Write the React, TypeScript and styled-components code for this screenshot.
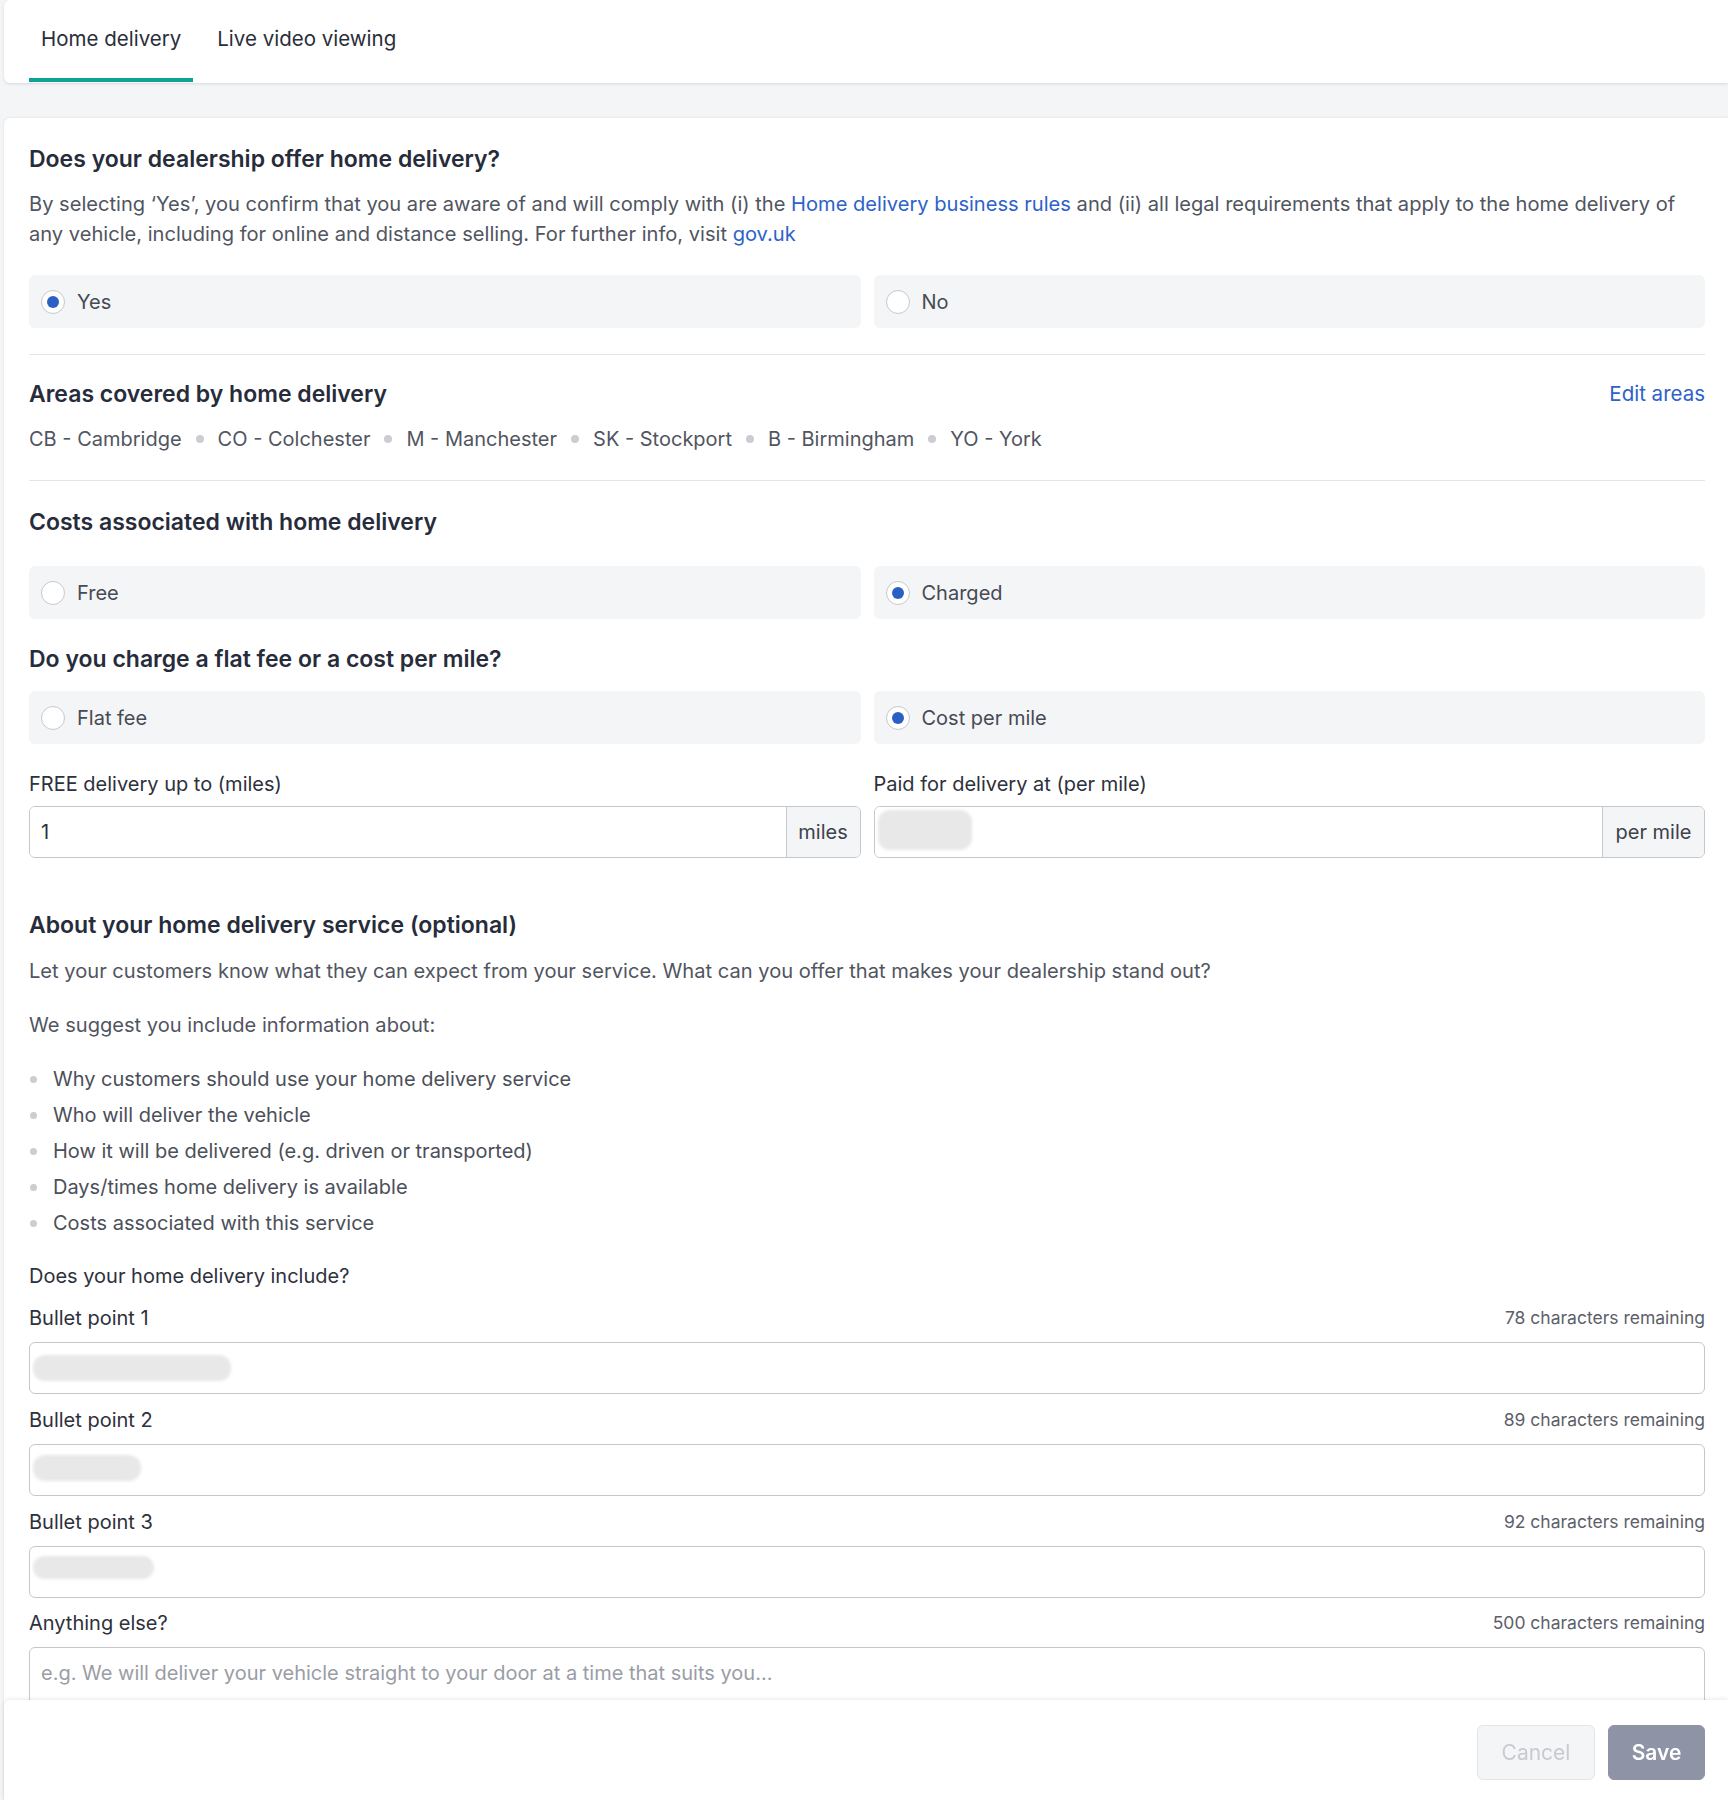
import React from 'react';
import styled, { createGlobalStyle } from 'styled-components';

const Global = createGlobalStyle`
  html, body { margin: 0; padding: 0; background: #f4f5f7; }
  body { font-family: Inter, "Noto Sans", Arial, sans-serif; color: #2a2e39; }
  * { box-sizing: border-box; }
`;

const Page = styled.div`
  height: 1800px;
  overflow: hidden;
  padding-left: 4px;
  background: #f4f5f7;
`;

const TabCard = styled.nav`
  height: 83px;
  background: #fff;
  border-radius: 6px 0 0 6px;
  box-shadow: 0 1px 3px rgba(20, 25, 40, 0.12);
  display: flex;
  align-items: stretch;
  padding-left: 25px;
  gap: 12px;
`;

const Tab = styled.div<{ $active?: boolean }>`
  padding: 0 12px 2px;
  height: 82px;
  display: flex;
  align-items: center;
  font-size: 20.5px;
  color: #2a2e39;
  border-bottom: 4px solid ${(p) => (p.$active ? '#0fa29a' : 'transparent')};
`;

const Card = styled.main`
  margin-top: 35px;
  background: #fff;
  border-radius: 6px 0 0 0;
  box-shadow: 0 0 3px rgba(20, 25, 40, 0.1);
  padding: 26px 23px 200px 25px;
`;

const Heading = styled.h2<{ $mt?: number }>`
  margin: ${(p) => p.$mt ?? 0}px 0 0;
  font-size: 23px;
  line-height: 30px;
  font-weight: 600;
  color: #272c3b;
`;

const Para = styled.p<{ $mt?: number }>`
  margin: ${(p) => p.$mt ?? 0}px 0 0;
  font-size: 20.1px;
  line-height: 30px;
  color: #51555f;
`;

const Link = styled.a`
  color: #2d62c9;
  text-decoration: none;
`;

const RadioGrid = styled.div<{ $mt: number }>`
  margin-top: ${(p) => p.$mt}px;
  display: grid;
  grid-template-columns: 1fr 1fr;
  gap: 13px;
`;

const RadioRow = styled.label`
  height: 53px;
  background: #f4f5f7;
  border-radius: 6px;
  padding-left: 12px;
  display: flex;
  align-items: center;
  gap: 12px;
  font-size: 20px;
  color: #464a54;
`;

const Circle = styled.span<{ $checked?: boolean }>`
  width: 24px;
  height: 24px;
  border-radius: 50%;
  background: #fff;
  border: 1px solid #c6c8ce;
  display: flex;
  align-items: center;
  justify-content: center;
  &::after {
    content: '';
    width: 12px;
    height: 12px;
    border-radius: 50%;
    background: ${(p) => (p.$checked ? '#2a60c4' : 'transparent')};
  }
`;

const Divider = styled.hr<{ $mt: number }>`
  margin: ${(p) => p.$mt}px 0 0;
  border: 0;
  border-top: 1px solid #e3e4e8;
`;

const SplitRow = styled.div<{ $mt: number }>`
  margin-top: ${(p) => p.$mt}px;
  display: flex;
  justify-content: space-between;
  align-items: center;
`;

const EditLink = styled(Link)`
  font-size: 20.5px;
  line-height: 30px;
`;

const Areas = styled.div`
  margin-top: 15px;
  display: flex;
  align-items: center;
  gap: 14px;
  font-size: 20px;
  line-height: 30px;
  color: #51555f;
`;

const Dot = styled.span`
  width: 8px;
  height: 8px;
  border-radius: 50%;
  background: #cbcdd2;
`;

const FieldGrid = styled.div`
  margin-top: 25px;
  display: grid;
  grid-template-columns: 1fr 1fr;
  column-gap: 13px;
`;

const Field = styled.div`
  display: flex;
  flex-direction: column;
`;

const Label = styled.div`
  font-size: 20px;
  line-height: 30px;
  color: #2d313c;
`;

const InputGroup = styled.div`
  margin-top: 7px;
  height: 52px;
  display: flex;
  border: 1px solid #c5c7cd;
  border-radius: 6px;
  overflow: hidden;
`;

const InputBox = styled.div`
  flex: 1;
  position: relative;
  display: flex;
  align-items: center;
  padding-left: 11px;
  font-size: 20px;
  color: #2d313c;
  background: #fff;
`;

const Addon = styled.div<{ $w: number }>`
  width: ${(p) => p.$w}px;
  border-left: 1px solid #c5c7cd;
  background: #f4f5f7;
  display: flex;
  align-items: center;
  justify-content: center;
  font-size: 20px;
  color: #3d414b;
`;

const Blob = styled.span<{ $w: number; $h: number; $t: number }>`
  position: absolute;
  left: 3px;
  top: ${(p) => p.$t}px;
  width: ${(p) => p.$w}px;
  height: ${(p) => p.$h}px;
  border-radius: 12px;
  background: #e8e8e9;
  filter: blur(1.5px);
`;

const List = styled.ul`
  margin: 24px 0 0;
  padding: 0;
  list-style: none;
  display: flex;
  flex-direction: column;
  gap: 6px;
`;

const Item = styled.li`
  display: flex;
  align-items: center;
  gap: 16px;
  padding-left: 1px;
  font-size: 20px;
  line-height: 30px;
  color: #4b4f59;
  &::before {
    content: '';
    width: 7px;
    height: 7px;
    border-radius: 50%;
    background: #cbcdd2;
  }
`;

const PlainText = styled.div<{ $mt: number }>`
  margin-top: ${(p) => p.$mt}px;
  font-size: 20px;
  line-height: 30px;
  color: #2d313c;
`;

const CountRow = styled.div<{ $mt: number }>`
  margin-top: ${(p) => p.$mt}px;
  display: flex;
  justify-content: space-between;
  align-items: center;
  line-height: 30px;
`;

const Count = styled.span`
  font-size: 17.5px;
  color: #5c606a;
`;

const TextInput = styled.div`
  margin-top: 9px;
  height: 52px;
  position: relative;
  border: 1px solid #c5c7cd;
  border-radius: 6px;
  background: #fff;
`;

const TextArea = styled.div`
  margin-top: 9px;
  height: 130px;
  border: 1px solid #c5c7cd;
  border-radius: 6px;
  padding: 10px 11px;
  font-size: 20px;
  line-height: 30px;
  color: #9a9da5;
`;

const Footer = styled.footer`
  position: fixed;
  left: 4px;
  right: 0;
  bottom: 0;
  height: 100px;
  background: #fff;
  border-radius: 6px 0 0 0;
  box-shadow: 0 -1px 4px rgba(20, 25, 40, 0.1);
  display: flex;
  justify-content: flex-end;
  align-items: flex-start;
  padding: 25px 23px 0 0;
  gap: 13px;
`;

const Button = styled.button<{ $primary?: boolean }>`
  height: 55px;
  width: ${(p) => (p.$primary ? 97 : 118)}px;
  border-radius: 6px;
  font-family: inherit;
  font-size: 21px;
  font-weight: ${(p) => (p.$primary ? 600 : 400)};
  border: 1px solid ${(p) => (p.$primary ? '#8e94a5' : '#e3e4e8')};
  background: ${(p) => (p.$primary ? '#8e94a5' : '#f4f5f7')};
  color: ${(p) => (p.$primary ? '#ffffff' : '#c8cad0')};
`;

const areas = ['CB - Cambridge', 'CO - Colchester', 'M - Manchester', 'SK - Stockport', 'B - Birmingham', 'YO - York'];

const bullets = [
  'Why customers should use your home delivery service',
  'Who will deliver the vehicle',
  'How it will be delivered (e.g. driven or transported)',
  'Days/times home delivery is available',
  'Costs associated with this service',
];

const Radio = ({ label, checked }: { label: string; checked?: boolean }) => (
  <RadioRow>
    <Circle $checked={checked} />
    {label}
  </RadioRow>
);

export default function App() {
  return (
    <Page>
      <Global />
      <TabCard>
        <Tab $active>Home delivery</Tab>
        <Tab>Live video viewing</Tab>
      </TabCard>
      <Card>
        <Heading>Does your dealership offer home delivery?</Heading>
        <Para $mt={15}>
          By selecting ‘Yes’, you confirm that you are aware of and will comply with (i) the{' '}
          <Link>Home delivery business rules</Link> and (ii) all legal requirements that apply to the home delivery of
          any vehicle, including for online and distance selling. For further info, visit <Link>gov.uk</Link>
        </Para>
        <RadioGrid $mt={26}>
          <Radio label="Yes" checked />
          <Radio label="No" />
        </RadioGrid>
        <Divider $mt={26} />
        <SplitRow $mt={24}>
          <Heading>Areas covered by home delivery</Heading>
          <EditLink>Edit areas</EditLink>
        </SplitRow>
        <Areas>
          {areas.map((a, i) => (
            <React.Fragment key={a}>
              {i > 0 && <Dot />}
              <span>{a}</span>
            </React.Fragment>
          ))}
        </Areas>
        <Divider $mt={26} />
        <Heading $mt={26}>Costs associated with home delivery</Heading>
        <RadioGrid $mt={29}>
          <Radio label="Free" />
          <Radio label="Charged" checked />
        </RadioGrid>
        <Heading $mt={25}>Do you charge a flat fee or a cost per mile?</Heading>
        <RadioGrid $mt={17}>
          <Radio label="Flat fee" />
          <Radio label="Cost per mile" checked />
        </RadioGrid>
        <FieldGrid>
          <Field>
            <Label>FREE delivery up to (miles)</Label>
            <InputGroup>
              <InputBox>1</InputBox>
              <Addon $w={74}>miles</Addon>
            </InputGroup>
          </Field>
          <Field>
            <Label>Paid for delivery at (per mile)</Label>
            <InputGroup>
              <InputBox>
                <Blob $w={94} $h={40} $t={3} />
              </InputBox>
              <Addon $w={102}>per mile</Addon>
            </InputGroup>
          </Field>
        </FieldGrid>
        <Heading $mt={52}>About your home delivery service (optional)</Heading>
        <Para $mt={16}>
          Let your customers know what they can expect from your service. What can you offer that makes your dealership
          stand out?
        </Para>
        <Para $mt={24}>We suggest you include information about:</Para>
        <List>
          {bullets.map((b) => (
            <Item key={b}>{b}</Item>
          ))}
        </List>
        <PlainText $mt={23}>Does your home delivery include?</PlainText>
        <CountRow $mt={12}>
          <Label>Bullet point 1</Label>
          <Count>78 characters remaining</Count>
        </CountRow>
        <TextInput>
          <Blob $w={198} $h={26} $t={12} />
        </TextInput>
        <CountRow $mt={11}>
          <Label>Bullet point 2</Label>
          <Count>89 characters remaining</Count>
        </CountRow>
        <TextInput>
          <Blob $w={108} $h={26} $t={10} />
        </TextInput>
        <CountRow $mt={11}>
          <Label>Bullet point 3</Label>
          <Count>92 characters remaining</Count>
        </CountRow>
        <TextInput>
          <Blob $w={121} $h={23} $t={9} />
        </TextInput>
        <CountRow $mt={10}>
          <Label>Anything else?</Label>
          <Count>500 characters remaining</Count>
        </CountRow>
        <TextArea>e.g. We will deliver your vehicle straight to your door at a time that suits you...</TextArea>
      </Card>
      <Footer>
        <Button>Cancel</Button>
        <Button $primary>Save</Button>
      </Footer>
    </Page>
  );
}
